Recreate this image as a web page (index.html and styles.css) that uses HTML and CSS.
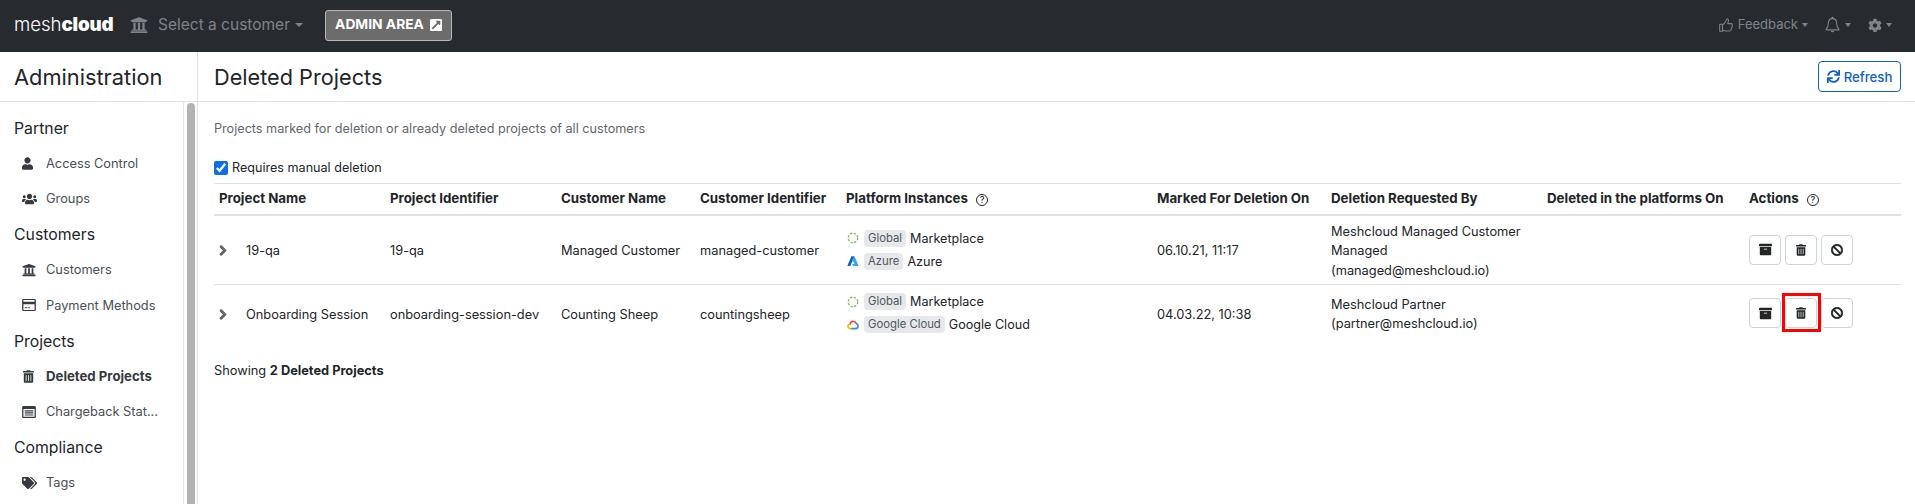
FILE: index.html
```html
<!DOCTYPE html>
<html lang="en">
<head>
<meta charset="utf-8">
<title>Deleted Projects</title>
<link rel="stylesheet" href="styles.css">
</head>
<body>
<svg class="defs" aria-hidden="true">
  <symbol id="i-chevron" viewBox="0 0 320 512"><path stroke="currentColor" stroke-width="56" d="M285.476 272.971L91.132 467.314c-9.373 9.373-24.569 9.373-33.941 0l-22.667-22.667c-9.357-9.357-9.375-24.522-.04-33.901L188.505 256 34.484 101.255c-9.335-9.379-9.317-24.544.04-33.901l22.667-22.667c9.373-9.373 24.569-9.373 33.941 0L285.475 239.03c9.373 9.372 9.373 24.568.001 33.941z"/></symbol>
  <symbol id="i-trash" viewBox="0 0 448 512"><path d="M32 464a48 48 0 0 0 48 48h288a48 48 0 0 0 48-48V128H32zm272-256a16 16 0 0 1 32 0v224a16 16 0 0 1-32 0zm-96 0a16 16 0 0 1 32 0v224a16 16 0 0 1-32 0zm-96 0a16 16 0 0 1 32 0v224a16 16 0 0 1-32 0zM432 32H312l-9.4-18.7A24 24 0 0 0 281.1 0H166.8a23.72 23.72 0 0 0-21.4 13.3L136 32H16A16 16 0 0 0 0 48v32a16 16 0 0 0 16 16h416a16 16 0 0 0 16-16V48a16 16 0 0 0-16-16z"/></symbol>
  <symbol id="i-archive" viewBox="0 0 512 512"><path d="M32 448c0 17.700 14.300 32 32 32h384c17.700 0 32-14.300 32-32V160H32v288zm160-212c0-6.600 5.400-12 12-12h104c6.600 0 12 5.400 12 12v8c0 6.600-5.400 12-12 12H204c-6.600 0-12-5.400-12-12v-8zM480 32H32C14.300 32 0 46.300 0 64v48c0 8.800 7.200 16 16 16h480c8.800 0 16-7.200 16-16V64c0-17.700-14.300-32-32-32z"/></symbol>
  <symbol id="i-ban" viewBox="0 0 512 512"><path stroke="currentColor" stroke-width="24" d="M256 8C119.034 8 8 119.033 8 256s111.034 248 248 248 248-111.034 248-248S392.967 8 256 8zm130.108 117.892c65.448 65.448 70 165.481 20.677 235.637L150.470 105.216c70.204-49.356 170.226-44.735 235.638 20.676zM125.892 386.108c-65.448-65.448-70-165.481-20.677-235.637L361.530 406.784c-70.203 49.356-170.226 44.736-235.638-20.676z"/></symbol>
  <symbol id="i-user" viewBox="0 0 448 512"><path d="M224 256c70.700 0 128-57.300 128-128S294.700 0 224 0 96 57.300 96 128s57.300 128 128 128zm89.600 32h-16.700c-22.200 10.200-46.900 16-72.900 16s-50.600-5.800-72.900-16h-16.700C60.200 288 0 348.200 0 422.400V464c0 26.500 21.500 48 48 48h352c26.500 0 48-21.500 48-48v-41.600c0-74.200-60.200-134.400-134.400-134.400z"/></symbol>
  <symbol id="i-users" viewBox="0 0 640 512"><path d="M96 224c35.300 0 64-28.700 64-64s-28.700-64-64-64-64 28.700-64 64 28.700 64 64 64zm448 0c35.300 0 64-28.700 64-64s-28.700-64-64-64-64 28.700-64 64 28.700 64 64 64zm32 32h-64c-17.600 0-33.500 7.100-45.100 18.600 40.300 22.100 68.900 62 75.100 109.400h66c17.700 0 32-14.300 32-32v-32c0-35.300-28.700-64-64-64zm-256 0c61.900 0 112-50.100 112-112S381.900 32 320 32 208 82.100 208 144s50.100 112 112 112zm76.800 32h-8.300c-20.800 10-43.900 16-68.500 16s-47.600-6-68.500-16h-8.300C179.600 288 128 339.600 128 403.200V432c0 26.500 21.500 48 48 48h288c26.500 0 48-21.500 48-48v-28.800c0-63.600-51.600-115.200-115.200-115.200zm-223.700-13.400C161.500 263.100 145.600 256 128 256H64c-35.300 0-64 28.700-64 64v32c0 17.700 14.300 32 32 32h65.900c6.300-47.400 34.900-87.300 75.200-109.400z"/></symbol>
  <symbol id="i-bank" viewBox="0 0 512 512"><path d="M496 128v16a8 8 0 0 1-8 8h-24v12c0 6.627-5.373 12-12 12H60c-6.627 0-12-5.373-12-12v-12H24a8 8 0 0 1-8-8v-16a8 8 0 0 1 4.941-7.392l232-88a7.996 7.996 0 0 1 6.118 0l232 88A8 8 0 0 1 496 128zm-24 304H40c-13.255 0-24 10.745-24 24v16a8 8 0 0 0 8 8h464a8 8 0 0 0 8-8v-16c0-13.255-10.745-24-24-24zM96 192v192H60c-6.627 0-12 5.373-12 12v20h416v-20c0-6.627-5.373-12-12-12h-36V192h-64v192h-64V192h-64v192h-64V192H96z"/></symbol>
  <symbol id="i-tags" viewBox="0 0 640 512"><path d="M497.941 225.941L286.059 14.059A48 48 0 0 0 252.118 0H48C21.490 0 0 21.490 0 48v204.118a48 48 0 0 0 14.059 33.941l211.882 211.882c18.744 18.745 49.136 18.746 67.882 0l204.118-204.118c18.745-18.745 18.745-49.137 0-67.882zM112 160c-26.510 0-48-21.490-48-48s21.490-48 48-48 48 21.490 48 48-21.490 48-48 48zm513.941 133.823L421.823 497.941c-18.745 18.745-49.137 18.745-67.882 0l-.360-.360L527.640 323.522c16.999-16.999 26.360-39.600 26.360-63.640s-9.362-46.641-26.360-63.640L331.397 0h48.721a48 48 0 0 1 33.941 14.059l211.882 211.882c18.745 18.745 18.745 49.137 0 67.882z"/></symbol>
  <symbol id="i-cog" viewBox="0 0 512 512"><path d="M487.4 315.700l-42.600-24.600c4.300-23.200 4.300-47 0-70.200l42.600-24.600c4.900-2.800 7.100-8.600 5.500-14-11.100-35.600-30-67.800-54.700-94.600-3.800-4.100-10-5.100-14.800-2.300L380.800 110c-17.900-15.400-38.500-27.300-60.800-35.100V25.800c0-5.600-3.900-10.500-9.400-11.700-36.700-8.200-74.300-7.800-109.200 0-5.500 1.200-9.400 6.100-9.400 11.700V75c-22.200 7.900-42.800 19.800-60.800 35.100L88.700 85.500c-4.900-2.800-11-1.900-14.800 2.300-24.700 26.700-43.600 58.900-54.700 94.600-1.700 5.400.6 11.200 5.500 14L67.300 221c-4.300 23.200-4.300 47 0 70.200l-42.600 24.600c-4.900 2.800-7.100 8.600-5.500 14 11.100 35.600 30 67.800 54.700 94.600 3.800 4.100 10 5.100 14.800 2.300l42.600-24.600c17.900 15.400 38.500 27.300 60.800 35.100v49.200c0 5.600 3.900 10.500 9.400 11.700 36.700 8.200 74.300 7.800 109.200 0 5.500-1.200 9.400-6.100 9.400-11.700v-49.200c22.200-7.900 42.800-19.800 60.800-35.100l42.600 24.600c4.900 2.800 11 1.900 14.800-2.300 24.700-26.700 43.600-58.900 54.700-94.600 1.500-5.500-.7-11.300-5.600-14.100zM256 336c-44.100 0-80-35.900-80-80s35.900-80 80-80 80 35.900 80 80-35.900 80-80 80z"/></symbol>
  <symbol id="i-sync" viewBox="0 0 512 512"><path d="M440.650 12.570l4 82.770A247.160 247.160 0 0 0 255.830 8C134.730 8 33.910 94.920 12.290 209.820A12 12 0 0 0 24.090 224h49.050a12 12 0 0 0 11.670-9.260 175.910 175.910 0 0 1 317-56.940l-101.460-4.860a12 12 0 0 0-12.570 12v47.410a12 12 0 0 0 12 12H500a12 12 0 0 0 12-12V12a12 12 0 0 0-12-12h-47.370a12 12 0 0 0-11.980 12.570zM255.830 432a175.610 175.610 0 0 1-146-77.800l101.800 4.870a12 12 0 0 0 12.570-12v-47.400a12 12 0 0 0-12-12H12a12 12 0 0 0-12 12V500a12 12 0 0 0 12 12h47.350a12 12 0 0 0 12-12.600l-4.150-82.570A247.170 247.170 0 0 0 255.830 504c121.110 0 221.930-86.920 243.550-201.820a12 12 0 0 0-11.800-14.180h-49.050a12 12 0 0 0-11.670 9.260A175.860 175.860 0 0 1 255.830 432z"/></symbol>
  <symbol id="i-ext" viewBox="0 0 448 512"><path d="M448 80v352c0 26.510-21.490 48-48 48H48c-26.510 0-48-21.490-48-48V80c0-26.510 21.490-48 48-48h352c26.510 0 48 21.490 48 48zm-88 16H248.029c-21.313 0-32.080 25.861-16.970 40.971l31.984 31.987L67.515 364.485c-4.686 4.686-4.686 12.284 0 16.971l31.029 31.029c4.687 4.686 12.285 4.686 16.971 0l195.526-195.526 31.988 31.991C358.058 263.977 384 253.425 384 231.979V120c0-13.255-10.745-24-24-24z"/></symbol>
  <symbol id="i-card" viewBox="0 0 16 14"><path fill-rule="evenodd" d="M1.500 0h13A1.500 1.500 0 0 1 16 1.500v11a1.500 1.500 0 0 1-1.500 1.500h-13A1.500 1.500 0 0 1 0 12.500v-11A1.500 1.500 0 0 1 1.500 0zM1.500 1.300v1.900h13V1.300zM1.500 6v6.500a.2.200 0 0 0 .2.200h12.600a.2.200 0 0 0 .2-.2V6zM3 9.700h3v1H3zm4 0h2v1H7z"/></symbol>
  <symbol id="i-list" viewBox="0 0 16 14"><path fill-rule="evenodd" d="M1.500 0h13A1.500 1.500 0 0 1 16 1.500v11a1.500 1.500 0 0 1-1.500 1.500h-13A1.500 1.500 0 0 1 0 12.500v-11A1.500 1.500 0 0 1 1.500 0zM1.500 3.500v9h13v-9zM3 5h10v1.300H3zm0 2.400h10v1.300H3zm0 2.400h10v1.300H3z"/></symbol>
  <symbol id="i-thumb" viewBox="0 0 20 20"><path fill="none" stroke="currentColor" stroke-width="1.500" stroke-linejoin="round" d="M1 9h4v10H1zM5 10c2-1 4-4 5-6 .6-1.300.5-3 1.500-3 1.700 0 2.300 2 1.800 3.700L12.500 8H17.500c1.700 0 2 2 1.100 2.800.8 1 .5 2.300-.5 2.800.5 1.100 0 2.200-1 2.500.3 1.400-.5 2.400-2 2.400H10c-2 0-3.500-1-5-1.300z"/></symbol>
  <symbol id="i-bell" viewBox="0 0 20 22"><path fill="none" stroke="currentColor" stroke-width="1.400" stroke-linejoin="round" d="M10 2.500c-3.400 0-5.500 2.600-5.500 5.800 0 5-1.300 6.500-3 8.500v.7h17v-.7c-1.700-2-3-3.500-3-8.500 0-3.200-2.100-5.800-5.500-5.800z"/><path d="M8.500 2.600V1.500a1.500 1.500 0 0 1 3 0v1.100zM7.700 18.500h4.600a2.300 2.300 0 0 1-4.600 0z"/></symbol>
  <symbol id="i-global" viewBox="0 0 16 16"><circle cx="8" cy="8" r="6.300" fill="none" stroke="#7fbf5a" stroke-width="1.900" stroke-dasharray="3 2"/></symbol>
  <symbol id="i-azure" viewBox="0 0 16 16"><path fill="#0a5fc4" d="M5.800 1.500h4L4.500 14.500H.5z"/><path fill="#2fa9ee" d="M10 1.500l5.500 13h-7l-1.800-2.500H10L7 6z"/></symbol>
  <symbol id="i-gcloud" viewBox="0 0 16 14"><path fill="none" stroke="#ea4335" stroke-width="2.200" d="M4 6.500C4.500 3.500 6.500 2 8.200 2c1.700 0 3.200 1 3.900 2.800"/><path fill="none" stroke="#4285f4" stroke-width="2.200" d="M12 4.800c1.800.5 2.800 2 2.800 3.500 0 2-1.500 3.500-3.300 3.500H8"/><path fill="none" stroke="#34a853" stroke-width="2.200" d="M8.500 11.800H4.500"/><path fill="none" stroke="#fbbc05" stroke-width="2.200" d="M4.800 11.800C2.800 11.800 1.200 10.300 1.200 8.500c0-1.300.8-2.300 2.200-2.900"/></symbol>
</svg>

<header class="navbar">
  <div class="logo"><span class="logo-a">mesh</span><span class="logo-b">cloud</span></div>
  <div class="nav-customer">
    <svg class="ic-bank"><use href="#i-bank"/></svg>
    <span>Select a customer</span><i class="caret"></i>
  </div>
  <a class="admin-btn">ADMIN AREA <svg class="ic-ext"><use href="#i-ext"/></svg></a>
  <div class="nav-right">
    <div class="nav-item"><svg class="ic-thumb"><use href="#i-thumb"/></svg><span>Feedback</span><i class="caret"></i></div>
    <div class="nav-item"><svg class="ic-bell"><use href="#i-bell"/></svg><i class="caret"></i></div>
    <div class="nav-item"><svg class="ic-cog"><use href="#i-cog"/></svg><i class="caret"></i></div>
  </div>
</header>

<div class="main">
  <aside class="sidebar">
    <h2 class="side-title">Administration</h2>
    <div class="side-body">
      <nav class="side-nav">
        <h3 class="side-head">Partner</h3>
        <a class="side-item"><span class="side-ic"><svg class="w-u"><use href="#i-user"/></svg></span>Access Control</a>
        <a class="side-item"><span class="side-ic"><svg class="w-us"><use href="#i-users"/></svg></span>Groups</a>
        <h3 class="side-head">Customers</h3>
        <a class="side-item"><span class="side-ic"><svg class="w-b"><use href="#i-bank"/></svg></span>Customers</a>
        <a class="side-item"><span class="side-ic"><svg class="w-c"><use href="#i-card"/></svg></span>Payment Methods</a>
        <h3 class="side-head">Projects</h3>
        <a class="side-item active"><span class="side-ic"><svg class="w-t"><use href="#i-trash"/></svg></span>Deleted Projects</a>
        <a class="side-item"><span class="side-ic"><svg class="w-c"><use href="#i-list"/></svg></span>Chargeback Stat...</a>
        <h3 class="side-head">Compliance</h3>
        <a class="side-item"><span class="side-ic"><svg class="w-us"><use href="#i-tags"/></svg></span>Tags</a>
      </nav>
      <div class="scrollbar"><div class="thumb"></div></div>
    </div>
  </aside>

  <main class="content">
    <div class="page-head">
      <h1>Deleted Projects</h1>
      <button class="refresh"><svg class="ic-sync"><use href="#i-sync"/></svg>Refresh</button>
    </div>
    <div class="page-body">
      <p class="desc">Projects marked for deletion or already deleted projects of all customers</p>
      <label class="check"><input type="checkbox" checked>Requires manual deletion</label>
      <table class="grid">
        <colgroup>
          <col class="c1"><col class="c2"><col class="c3"><col class="c4"><col class="c5"><col class="c6"><col class="c7"><col class="c8"><col class="c9">
        </colgroup>
        <thead>
          <tr>
            <th>Project Name</th><th>Project Identifier</th><th>Customer Name</th><th>Customer Identifier</th>
            <th>Platform Instances <span class="help">?</span></th>
            <th>Marked For Deletion On</th><th>Deletion Requested By</th><th>Deleted in the platforms On</th>
            <th>Actions <span class="help">?</span></th>
          </tr>
        </thead>
        <tbody>
          <tr>
            <td><div class="name"><svg class="chev"><use href="#i-chevron"/></svg>19-qa</div></td>
            <td>19-qa</td><td>Managed Customer</td><td>managed-customer</td>
            <td class="boxed">
              <div class="plat"><svg class="pi"><use href="#i-global"/></svg><span class="badge">Global</span>Marketplace</div>
              <div class="plat"><svg class="pi"><use href="#i-azure"/></svg><span class="badge">Azure</span>Azure</div>
            </td>
            <td>06.10.21, 11:17</td>
            <td>Meshcloud Managed Customer<br>Managed<br>(managed@meshcloud.io)</td>
            <td></td>
            <td class="boxed"><div class="acts">
              <button class="act"><svg class="a-ar"><use href="#i-archive"/></svg></button>
              <button class="act"><svg class="a-tr"><use href="#i-trash"/></svg></button>
              <button class="act"><svg class="a-ba"><use href="#i-ban"/></svg></button>
            </div></td>
          </tr>
          <tr class="row-b">
            <td><div class="name"><svg class="chev"><use href="#i-chevron"/></svg>Onboarding Session</div></td>
            <td>onboarding-session-dev</td><td>Counting Sheep</td><td>countingsheep</td>
            <td class="boxed">
              <div class="plat"><svg class="pi"><use href="#i-global"/></svg><span class="badge">Global</span>Marketplace</div>
              <div class="plat"><svg class="pi"><use href="#i-gcloud"/></svg><span class="badge">Google Cloud</span>Google Cloud</div>
            </td>
            <td>04.03.22, 10:38</td>
            <td>Meshcloud Partner<br>(partner@meshcloud.io)</td>
            <td></td>
            <td class="boxed"><div class="acts">
              <button class="act"><svg class="a-ar"><use href="#i-archive"/></svg></button>
              <button class="act marked"><svg class="a-tr"><use href="#i-trash"/></svg></button>
              <button class="act"><svg class="a-ba"><use href="#i-ban"/></svg></button>
            </div></td>
          </tr>
        </tbody>
      </table>
      <p class="count">Showing <b>2 Deleted Projects</b></p>
    </div>
  </main>
</div>
</body>
</html>
```
FILE: styles.css
```css
* { box-sizing: border-box; }
html, body { height: 100%; }
body {
  margin: 0;
  display: flex;
  flex-direction: column;
  overflow: hidden;
  font-family: Inter, "Liberation Sans", sans-serif;
  font-size: 12.8px;
  line-height: 19.5px;
  color: #212529;
  background: #fff;
}
.defs { position: absolute; width: 0; height: 0; }
svg { fill: currentColor; display: block; flex: none; }

/* navbar */
.navbar {
  height: 52px;
  flex: none;
  display: flex;
  align-items: center;
  background: #272b30;
  color: #7f8387;
  padding: 0 23px 2px 14px;
}
.logo { font-size: 18.7px; color: #fff; width: 116px; letter-spacing: -.1px; }
.logo-a { font-weight: 300; }
.logo-b { font-weight: 900; }
.nav-customer { display: flex; align-items: center; font-size: 15.5px; }
.ic-bank { width: 18px; height: 18px; margin-right: 10px; }
.caret {
  display: inline-block;
  width: 0; height: 0;
  margin-left: 5px;
  border-top: 4px solid currentColor;
  border-left: 4px solid transparent;
  border-right: 4px solid transparent;
}
.admin-btn {
  margin-left: 22px;
  height: 31px;
  width: 127px;
  display: flex;
  align-items: center;
  justify-content: center;
  gap: 6px;
  background: #6c6c6c;
  border: 1px solid #b5b8ba;
  border-radius: 3px;
  color: #fff;
  font-size: 13.8px;
  font-weight: 700;
}
.ic-ext { width: 12px; height: 14px; }
.nav-right { margin-left: auto; display: flex; align-items: center; gap: 17px; font-size: 13px; }
.nav-item { display: flex; align-items: center; }
.nav-item .caret { margin-left: 4px; border-left-width: 3.5px; border-right-width: 3.5px; }
.ic-thumb { width: 14px; height: 16px; margin-right: 5px; }
.ic-bell { width: 15px; height: 18px; margin-right: 1px; }
.ic-cog { width: 14px; height: 15px; }

/* layout */
.main { flex: 1; display: flex; min-height: 0; }
.sidebar {
  width: 198px;
  flex: none;
  display: flex;
  flex-direction: column;
  border-right: 1px solid #dee2e6;
  min-height: 0;
}
.side-title {
  margin: 0;
  height: 50px;
  flex: none;
  padding: 11px 14px 0;
  font-size: 21.8px;
  line-height: 29px;
  font-weight: 400;
  border-bottom: 1px solid #dee2e6;
}
.side-body { flex: 1; display: flex; min-height: 0; overflow: hidden; }
.side-nav { flex: 1; padding: 14.5px 0 0 14px; min-width: 0; }
.side-head {
  margin: 0;
  height: 35.5px;
  font-size: 15.8px;
  font-weight: 400;
  line-height: 24px;
}
.side-item {
  display: flex;
  align-items: center;
  height: 35.5px;
  color: #495057;
  margin-top: -6.5px;
  margin-bottom: 6.5px;
  white-space: nowrap;
}
.side-item.active { font-weight: 700; color: #343a40; font-size: 13.2px; }
.side-ic { width: 32px; padding-left: 8px; display: flex; color: #343a40; }
.w-u { width: 11px; height: 13px; }
.w-us { width: 15px; height: 12px; }
.w-b { width: 14px; height: 14px; }
.w-c { width: 14px; height: 12px; }
.w-t { width: 11px; height: 13px; margin-left: 1px; }
.scrollbar {
  width: 14px;
  flex: none;
  border-left: 1px solid #e8e8e8;
  padding: 1px 2px 0 3px;
  display: flex;
}
.thumb { flex: 1; background: #b3b3b3; border-radius: 4px 4px 0 0; }

/* content */
.content { flex: 1; min-width: 0; display: flex; flex-direction: column; }
.page-head {
  height: 50px;
  flex: none;
  display: flex;
  align-items: center;
  justify-content: space-between;
  padding: 0 14px 0 16px;
  border-bottom: 1px solid #dee2e6;
}
.page-head h1 { margin: 2px 0 0; font-size: 21.7px; line-height: 29px; font-weight: 400; }
.refresh {
  width: 83px;
  height: 31px;
  display: flex;
  align-items: center;
  justify-content: center;
  gap: 4px;
  background: #fff;
  color: #0d62c9;
  border: 1px solid #0d62c9;
  border-radius: 4px;
  font: 500 13.2px Inter, sans-serif;
}
.ic-sync { width: 13px; height: 13px; }
.page-body { padding: 17px 14px 0 16px; }
.desc { margin: 0; font-size: 12.65px; color: #5f676f; }
.check { display: flex; align-items: center; margin-top: 19.5px; height: 19.5px; font-size: 12.6px; }
.check input { width: 14px; height: 14px; margin: 0 4px 0 0; accent-color: #0d6ee8; }
.grid {
  width: 100%;
  margin-top: 5.5px;
  border-collapse: collapse;
  table-layout: fixed;
  border-top: 1px solid #dee2e6;
}
.c1, .c2 { width: 171px; }
.c3 { width: 139px; }
.c4 { width: 146px; }
.c5 { width: 311px; }
.c6 { width: 174px; }
.c7 { width: 216px; }
.c8 { width: 202px; }
.grid th {
  text-align: left;
  font-size: 13.3px;
  font-weight: 700;
  padding: 5px;
  height: 30px;
  white-space: nowrap;
  border-bottom: 2px solid #dee2e6;
}
.grid td { padding: 6px 5px 4px; vertical-align: middle; }
.grid td.boxed { padding: 5px; }
.grid tbody tr:first-child td { border-bottom: 1px solid #dee2e6; }
.row-b { height: 57px; }
.help {
  display: inline-block;
  width: 12px; height: 12px;
  margin-left: 5px;
  border: 1px solid #212529;
  border-radius: 50%;
  font-size: 9px;
  line-height: 10px;
  font-weight: 500;
  text-align: center;
  vertical-align: 0;
}
.name { display: flex; align-items: center; }
.chev { width: 8px; height: 11px; margin-right: 19px; color: #5f676f; }
.plat { display: flex; align-items: center; height: 23px; font-size: 12.6px; }
.pi { width: 12px; height: 12px; margin: 0 5px 0 1px; }
.badge {
  background: #e6e8eb;
  color: #51575d;
  border-radius: 4px;
  font-size: 11.3px;
  line-height: 17px;
  padding: 0 4px;
  margin-right: 4px;
}
.acts { display: flex; gap: 4px; }
.act {
  width: 32px;
  height: 30px;
  padding: 0;
  display: flex;
  align-items: center;
  justify-content: center;
  background: #fff;
  color: #212529;
  border: 1px solid #ced4da;
  border-radius: 4px;
}
.a-ar { width: 13px; height: 13px; }
.a-tr { width: 10px; height: 12px; }
.a-ba { width: 12px; height: 12px; }
.marked { position: relative; }
.marked::after {
  content: "";
  position: absolute;
  inset: -6px -5px -5px -4px;
  border: 3px solid #ff0000;
}
.count { margin: 19px 0 0; }
```
